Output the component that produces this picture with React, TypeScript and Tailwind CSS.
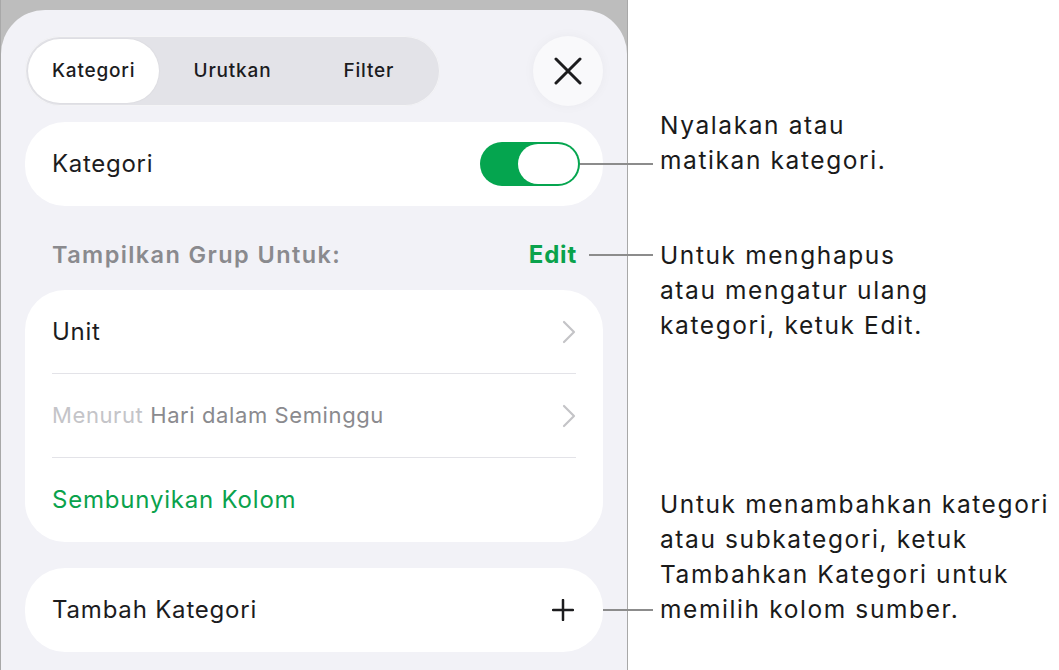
import React from 'react';

const FONT = { fontFamily: 'Inter, "Noto Sans", sans-serif' };

function Leader({ className }: { className: string }) {
  return <span className={`absolute top-1/2 h-[2px] -translate-y-1/2 bg-[#8c8c8c] ${className}`} />;
}

function Chevron() {
  return (
    <svg width="14" height="24" viewBox="0 0 14 24" fill="none" className="shrink-0">
      <path d="M2 2 L12 12 L2 22" stroke="#c4c4c7" strokeWidth="2.2" strokeLinecap="round" strokeLinejoin="round" />
    </svg>
  );
}

export default function App() {
  const tabs = ['Kategori', 'Urutkan', 'Filter'];

  return (
    <div className="flex h-[670px] w-[1059px] overflow-hidden bg-white text-[#1c1c1e]" style={FONT}>
      {/* Sheet */}
      <div className="relative z-10 w-[628px] shrink-0 border-x border-[#a8a8a8] bg-[#bdbdbd] pt-[10px]">
        <div className="flex h-full flex-col rounded-t-[44px] bg-[#f2f2f7] pl-6 pr-[24px] pt-[26px]">
          {/* Top bar */}
          <div className="flex items-center justify-between">
            <div className="grid h-[70px] w-[415px] grid-cols-3 rounded-full bg-[#e3e3e8] p-[3px] shadow-[inset_0_0_0_1px_rgba(255,255,255,0.6)]">
              {tabs.map((t, i) => (
                <div
                  key={t}
                  className={`flex items-center justify-center rounded-full text-[19px] font-medium tracking-[0.8px] ${
                    i === 0 ? 'mr-[5px] bg-white shadow-[0_0_2px_rgba(0,0,0,0.08)]' : ''
                  }`}
                >
                  {t}
                </div>
              ))}
            </div>
            <div className="flex h-[70px] w-[70px] items-center justify-center rounded-full bg-[#f9f9fb] shadow-[0_0_12px_rgba(0,0,0,0.04)]">
              <svg width="28" height="28" viewBox="0 0 28 28" fill="none">
                <path d="M2 2 L26 26 M26 2 L2 26" stroke="#1c1c1e" strokeWidth="3" strokeLinecap="round" />
              </svg>
            </div>
          </div>

          {/* Kategori toggle */}
          <div className="mt-4 flex h-[84px] items-center justify-between rounded-[40px] bg-white pl-[27px] pr-[23px]">
            <span className="text-[24px] tracking-[0.7px]">Kategori</span>
            <div className="relative">
              <div className="flex h-[44px] w-[100px] items-center justify-end rounded-full bg-[#05a54f] p-[2px]">
                <div className="h-[40px] w-[60px] rounded-full bg-white" />
              </div>
              <Leader className="left-full w-[73px]" />
            </div>
          </div>

          {/* Header */}
          <div className="mb-[22px] mt-[36px] flex items-center justify-between pl-[27px] pr-[26px] leading-[26px]">
            <span className="text-[23.5px] font-semibold tracking-[1.4px] text-[#8a8a8e]">Tampilkan Grup Untuk:</span>
            <span className="relative text-[24px] font-bold tracking-[0.8px] text-[#0aa24c]">
              Edit
              <Leader className="left-[calc(100%+12px)] w-[64px]" />
            </span>
          </div>

          {/* Group list */}
          <div className="rounded-[40px] bg-white pl-[27px] pr-[27px]">
            <div className="flex h-[83px] items-center justify-between">
              <span className="text-[24px] tracking-[0.7px]">Unit</span>
              <Chevron />
            </div>
            <div className="h-px bg-[#e3e3e8]" />
            <div className="flex h-[83px] items-center justify-between">
              <span className="text-[22px] tracking-[0.6px]">
                <span className="text-[#c4c4c8]">Menurut </span>
                <span className="text-[#8a8a8e]">Hari dalam Seminggu</span>
              </span>
              <Chevron />
            </div>
            <div className="h-px bg-[#e3e3e8]" />
            <div className="flex h-[84px] items-center">
              <span className="text-[24px] tracking-[0.8px] text-[#0aa24c]">Sembunyikan Kolom</span>
            </div>
          </div>

          {/* Add category */}
          <div className="relative mt-[26px] flex h-[84px] items-center justify-between rounded-[40px] bg-white pl-[27px] pr-[29px]">
            <span className="text-[24px] tracking-[0.8px]">Tambah Kategori</span>
            <svg width="22" height="22" viewBox="0 0 22 22" fill="none">
              <path d="M11 1 V21 M1 11 H21" stroke="#1c1c1e" strokeWidth="2.5" strokeLinecap="round" />
            </svg>
            <Leader className="left-full w-[50px]" />
          </div>
        </div>
      </div>

      {/* Callouts */}
      <div className="flex flex-col pl-8 pt-[108px] text-[24.5px] leading-[35px] tracking-[1.6px] text-[#1a1a1a]">
        <p>
          Nyalakan atau
          <br />
          matikan kategori.
        </p>
        <p className="mt-[60px]">
          Untuk menghapus
          <br />
          atau mengatur ulang
          <br />
          kategori, ketuk Edit.
        </p>
        <p className="mt-[144px] whitespace-nowrap">
          Untuk menambahkan kategori
          <br />
          atau subkategori, ketuk
          <br />
          Tambahkan Kategori untuk
          <br />
          memilih kolom sumber.
        </p>
      </div>
    </div>
  );
}
